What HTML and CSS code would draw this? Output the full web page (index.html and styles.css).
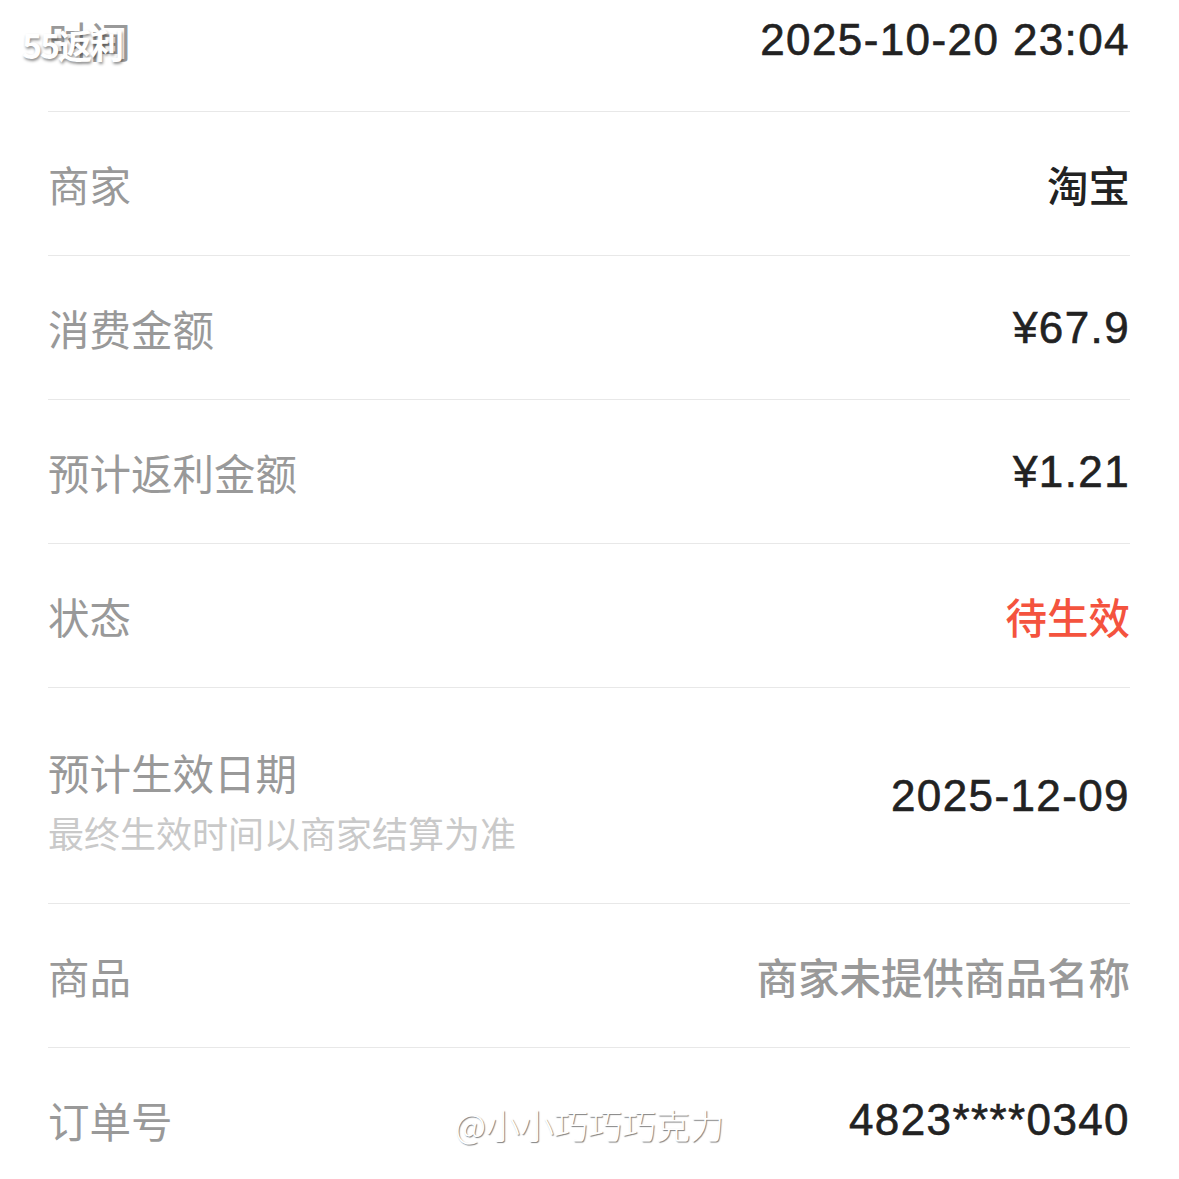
FILE: index.html
```html
<!DOCTYPE html>
<html lang="zh-CN">

<head>
    <meta charset="UTF-8">
    <meta name="viewport" content="width=device-width, initial-scale=1.0">
    <title>订单详情</title>
    <link rel="stylesheet" href="styles.css">
</head>

<body>

    <div class="page">
        <div class="list">
            <div class="item">
                <span class="label">时间</span>
                <span class="value num">2025-10-20 23:04</span>
            </div>
            <div class="item">
                <span class="label">商家</span>
                <span class="value">淘宝</span>
            </div>
            <div class="item">
                <span class="label">消费金额</span>
                <span class="value num">¥67.9</span>
            </div>
            <div class="item">
                <span class="label">预计返利金额</span>
                <span class="value num">¥1.21</span>
            </div>
            <div class="item">
                <span class="label">状态</span>
                <span class="value red">待生效</span>
            </div>
            <div class="item tall">
                <div class="label-box">
                    <div class="label">预计生效日期</div>
                    <div class="sub">最终生效时间以商家结算为准</div>
                </div>
                <span class="value num">2025-12-09</span>
            </div>
            <div class="item">
                <span class="label">商品</span>
                <span class="value gray">商家未提供商品名称</span>
            </div>
            <div class="item">
                <span class="label">订单号</span>
                <span class="value num">4823****0340</span>
            </div>
        </div>

        <!-- watermarks -->
        <div class="mark-logo">55返利</div>
        <div class="mark-user">@小小巧巧巧克力</div>
    </div>

</body>

</html>
```

FILE: styles.css
```css
* {
    padding: 0px;
    margin: 0px;
    box-sizing: border-box;
}

body {
    background-color: #fff;
    font-family: "Noto Sans CJK SC", "Noto Sans", sans-serif;
    overflow: hidden;
}

.page {
    position: relative;
    width: 1179px;
    height: 1179px;
    overflow: hidden;
}

.list {
    margin-top: -32px;
    padding: 0 49px 0 48px;
}

.item {
    height: 144px;
    display: flex;
    align-items: center;
    justify-content: space-between;
    border-bottom: 1px solid #e8e8e8;
}

.item.tall {
    height: 216px;
}

.label {
    font-size: 41.5px;
    color: #999;
    line-height: 48px;
}

.label-box {
    padding-top: 12px;
}

.sub {
    margin-top: 12px;
    font-size: 36px;
    line-height: 48px;
    color: #c9c9c9;
}

.value {
    font-size: 41.5px;
    font-weight: 500;
    color: #222;
    line-height: 48px;
}

.num {
    font-family: "Liberation Sans", "Noto Sans CJK SC", sans-serif;
    font-size: 44px;
    font-weight: 400;
    letter-spacing: 1.4px;
    -webkit-text-stroke: 0.6px #222;
}

.red {
    color: #f4533e;
}

.gray {
    color: #999;
}

.mark-logo {
    position: absolute;
    left: 22px;
    top: 20px;
    font-size: 34px;
    font-weight: 700;
    color: #fff;
    letter-spacing: -2px;
    text-shadow: 1px 2px 3px rgba(0, 0, 0, 0.45);
}

.mark-user {
    position: absolute;
    left: 455px;
    top: 1100px;
    font-size: 34px;
    font-weight: 300;
    color: #fff;
    text-shadow: 1px 1px 1px rgba(0, 0, 0, 0.5);
}
```
